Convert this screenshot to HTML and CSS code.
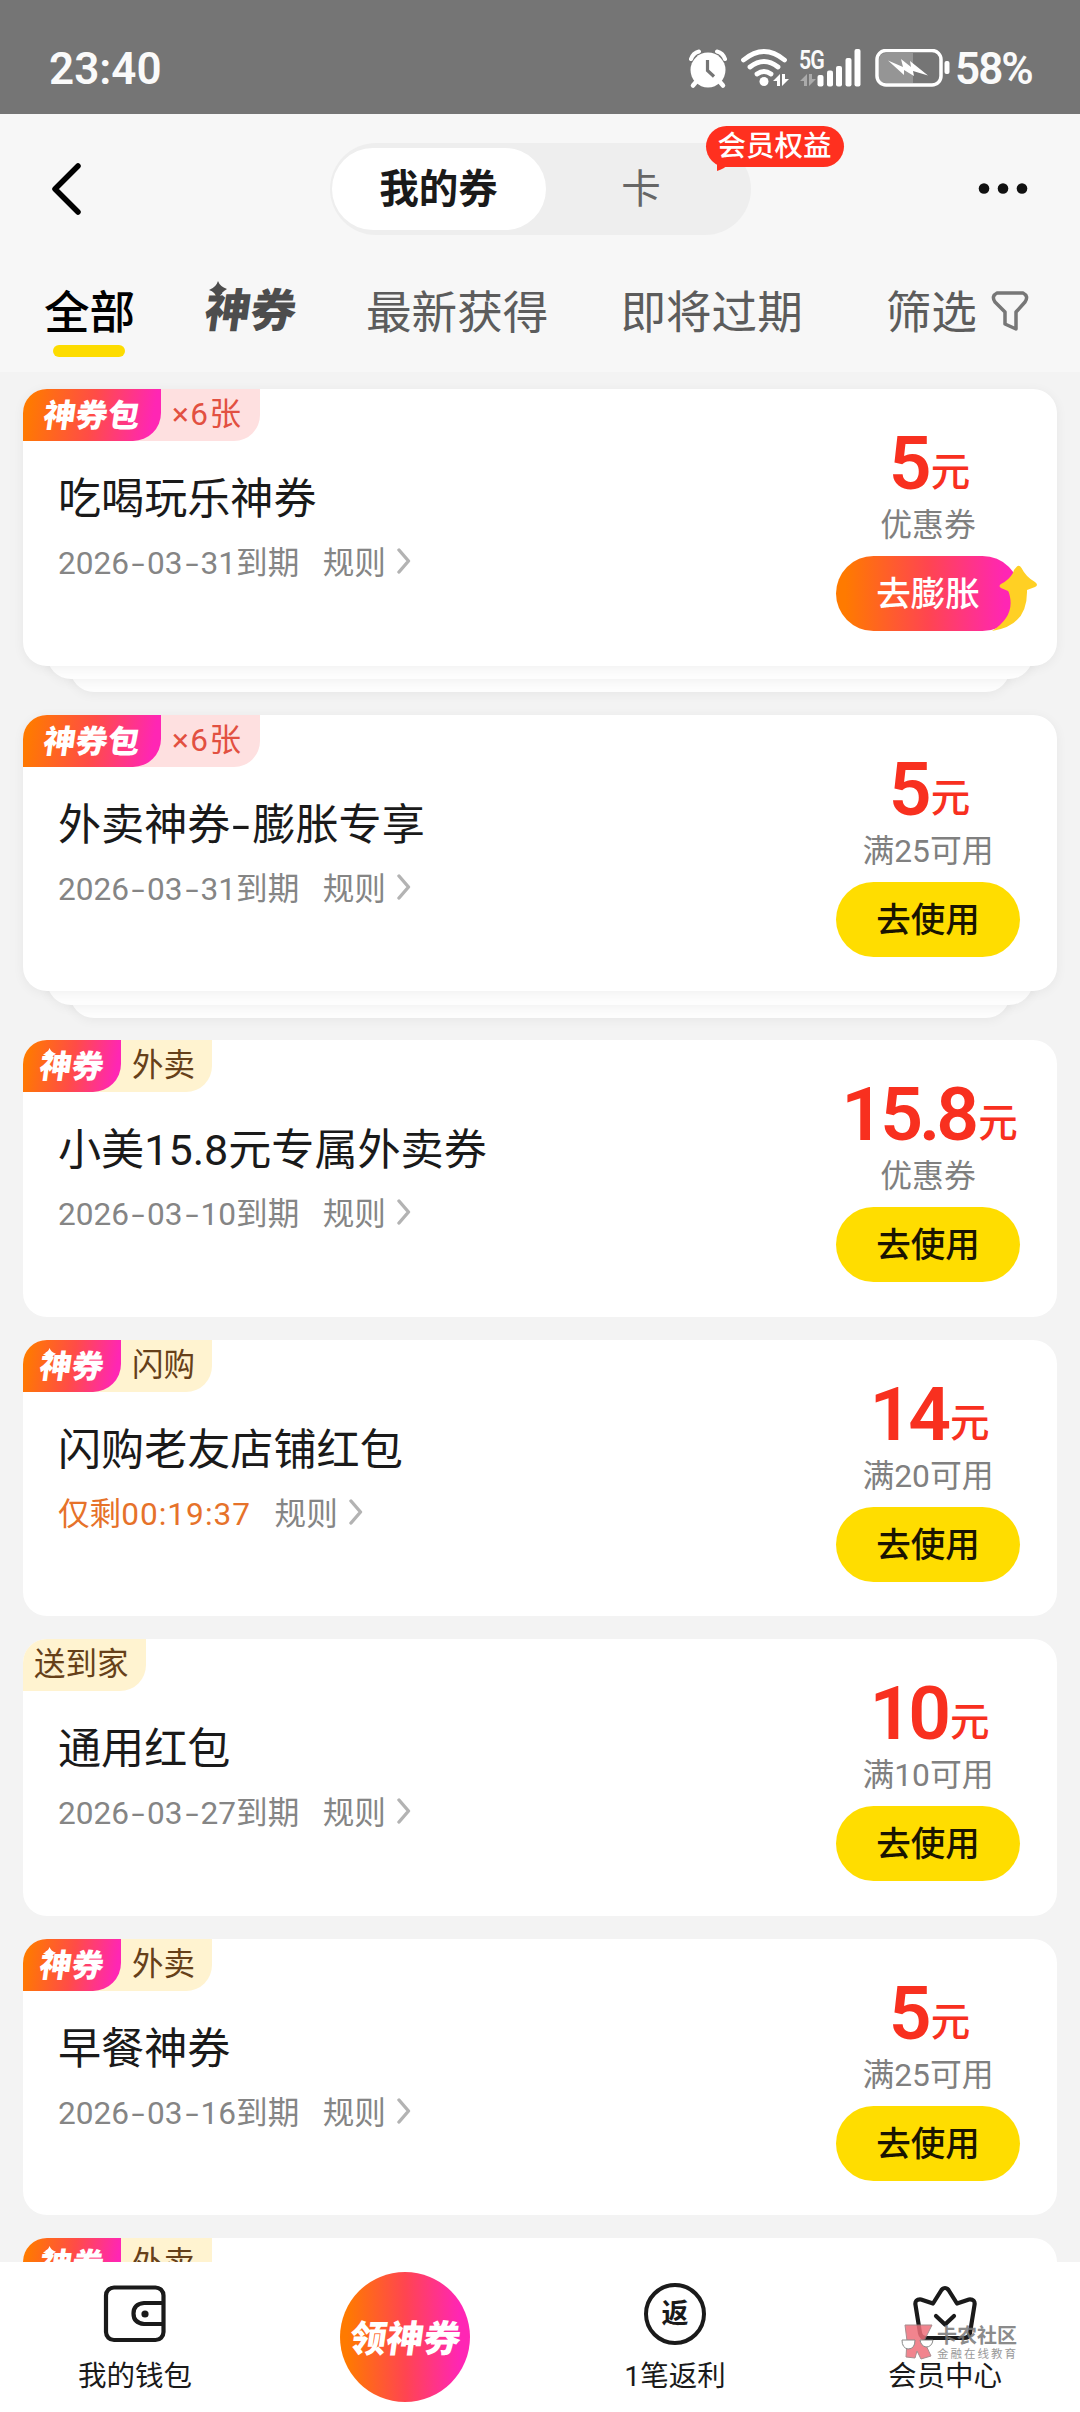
FILE: index.html
```html
<!DOCTYPE html>
<html lang="zh-CN">
<head>
<meta charset="utf-8">
<title>我的券</title>
<link rel="stylesheet" href="styles.css">
</head>
<body>
<svg width="0" height="0" class="defs" aria-hidden="true">
  <symbol id="chev" viewBox="0 0 14 26"><path d="M2 2 L11.5 13 L2 24" fill="none" stroke="#b3b3b3" stroke-width="3.400" stroke-linecap="round" stroke-linejoin="round"/></symbol>
  <symbol id="spark" viewBox="0 0 20 20"><path d="M10 0 Q12 6 20 9 Q14 12 10 20 Q7 12 0 10 Q8 7 10 0Z" fill="currentColor"/></symbol>
</svg>
<div class="screen">
  <div class="status">
    <span class="clock">23:40</span>
    <div class="status-right">
      <svg class="alarm" width="38" height="40" viewBox="0 0 38 40"><circle cx="19" cy="21" r="17.500" fill="#fff"/><path d="M2 10 Q4 4 10 2.500 M36 10 Q34 4 28 2.500" stroke="#fff" stroke-width="4" stroke-linecap="round" fill="none"/><path d="M7 33 L4 36.500 M31 33 L34 36.500" stroke="#fff" stroke-width="4.500" stroke-linecap="round"/><path d="M18.500 11 V21.500 L25 27.500" fill="none" stroke="#757575" stroke-width="3.200"/></svg>
      <svg class="wifi" width="50" height="40" viewBox="0 0 50 40"><g fill="none" stroke="#fff" stroke-width="4.800" stroke-linecap="round"><path d="M3.500 11 Q24 -6 44.500 11"/><path d="M10 18 Q24 7 38 18"/><path d="M17 25 Q24 20 31 25"/></g><circle cx="24" cy="32.500" r="4.500" fill="#fff"/><path d="M33 32 L40 25 V37 H37 V32Z M42 25 V37 L49 30 H45 V25Z" fill="#fff"/></svg>
      <div class="cell">
        <span class="g5">5G</span>
        <svg width="62" height="40" viewBox="0 0 62 40"><path d="M1 32 L8 25 V37 H5 V32Z M10 25 V37 L17 30 H13 V25Z" fill="#aaa"/><g fill="#fff"><rect x="18.500" y="26" width="6" height="11.500" rx="2"/><rect x="28" y="21.500" width="6" height="16" rx="2"/><rect x="37" y="17" width="6" height="20.500" rx="2"/><rect x="46.500" y="9" width="6" height="28.500" rx="2"/><rect x="55.500" y="0" width="6" height="37.500" rx="2"/></g></svg>
      </div>
      <svg class="battery" width="76" height="40" viewBox="0 0 76 40"><path d="M11 4 H38 V34 H11 Q4 34 4 29 V11 Q4 4 11 4Z" fill="#959595"/><rect x="2" y="1.500" width="64" height="34.500" rx="9" fill="none" stroke="#fff" stroke-width="3.500"/><path d="M13 11.500 L28 18 L26 10 L36 18 L35 12 L53 26.500 L38 22 L39 27 L29 21 L29 26Z" fill="#fff"/><rect x="69.500" y="12" width="5" height="13" rx="2" fill="#fff"/></svg>
      <span class="pct">58%</span>
    </div>
  </div>

  <header class="header">
    <div class="nav">
      <svg class="back" width="36" height="56" viewBox="0 0 36 56"><path d="M31 5 L8 28 L31 51" fill="none" stroke="#000" stroke-width="5.500" stroke-linecap="round" stroke-linejoin="round"/></svg>
      <div class="segment">
        <span class="seg on">我的券</span><span class="seg">卡</span>
        <span class="bubble">会员权益<svg width="14" height="12" viewBox="0 0 14 12"><path d="M1 0 L1 11 Q8 9 13 4Z" fill="#ff301f"/></svg></span>
      </div>
      <svg class="more" width="50" height="12" viewBox="0 0 50 12"><g fill="#111"><circle cx="6" cy="5.500" r="5.300"/><circle cx="25" cy="5.500" r="5.300"/><circle cx="44" cy="5.500" r="5.300"/></g></svg>
    </div>
    <nav class="tabs">
      <span class="tab active">全部</span>
      <span class="tab logo"><b>神券</b><svg class="spark"><use href="#spark"/></svg></span>
      <span class="tab t3">最新获得</span>
      <span class="tab t4">即将过期</span>
      <span class="tab t5">筛选<svg width="38" height="42" viewBox="0 0 38 42"><path d="M6 3 H32 Q38 6 34 12 L25 22 V39 L14 34 V22 L4 12 Q0 6 6 3Z" fill="none" stroke="#777" stroke-width="3.500" stroke-linejoin="round"/></svg></span>
    </nav>
  </header>

  <main class="list">
    <section class="card stack">
      <div class="face">
        <div class="tags"><span class="brand pack"><b>神券包</b></span><span class="tag pink">×6张</span></div>
        <div class="info"><h2>吃喝玩乐神券</h2><p><span>2026<i>-</i>03<i>-</i>31到期</span><span class="rule">规则</span><svg class="chev"><use href="#chev"/></svg></p></div>
        <div class="side"><div class="price"><b>5</b><em>元</em></div><div class="cond">优惠券</div><span class="btn hot">去膨胀<svg width="42" height="68" viewBox="0 0 42 68"><path d="M19.500 3 Q22 0 24.500 4 Q29 13 38 18 Q42 21 38 23 L30 26 Q31 62 -5 67 Q17 53 13 33 Q12 28 11 27 L4 24 Q1 22 4 20 Q12 16 16 9 Q17 5 19.500 3Z" fill="#ffd024"/></svg></span></div>
      </div>
    </section>
    <section class="card stack">
      <div class="face">
        <div class="tags"><span class="brand pack"><b>神券包</b></span><span class="tag pink">×6张</span></div>
        <div class="info"><h2>外卖神券<i>-</i>膨胀专享</h2><p><span>2026<i>-</i>03<i>-</i>31到期</span><span class="rule">规则</span><svg class="chev"><use href="#chev"/></svg></p></div>
        <div class="side"><div class="price"><b>5</b><em>元</em></div><div class="cond">满25可用</div><span class="btn">去使用</span></div>
      </div>
    </section>
    <section class="card">
      <div class="face">
        <div class="tags"><span class="brand"><b>神券</b><svg class="spark"><use href="#spark"/></svg></span><span class="tag">外卖</span></div>
        <div class="info"><h2>小美15.8元专属外卖券</h2><p><span>2026<i>-</i>03<i>-</i>10到期</span><span class="rule">规则</span><svg class="chev"><use href="#chev"/></svg></p></div>
        <div class="side"><div class="price"><b>15.8</b><em>元</em></div><div class="cond">优惠券</div><span class="btn">去使用</span></div>
      </div>
    </section>
    <section class="card">
      <div class="face">
        <div class="tags"><span class="brand"><b>神券</b><svg class="spark"><use href="#spark"/></svg></span><span class="tag">闪购</span></div>
        <div class="info"><h2>闪购老友店铺红包</h2><p><span class="left">仅剩<span>00:19:37</span></span><span class="rule">规则</span><svg class="chev"><use href="#chev"/></svg></p></div>
        <div class="side"><div class="price"><b>14</b><em>元</em></div><div class="cond">满20可用</div><span class="btn">去使用</span></div>
      </div>
    </section>
    <section class="card">
      <div class="face">
        <div class="tags"><span class="tag first">送到家</span></div>
        <div class="info"><h2>通用红包</h2><p><span>2026<i>-</i>03<i>-</i>27到期</span><span class="rule">规则</span><svg class="chev"><use href="#chev"/></svg></p></div>
        <div class="side"><div class="price"><b>10</b><em>元</em></div><div class="cond">满10可用</div><span class="btn">去使用</span></div>
      </div>
    </section>
    <section class="card">
      <div class="face">
        <div class="tags"><span class="brand"><b>神券</b><svg class="spark"><use href="#spark"/></svg></span><span class="tag">外卖</span></div>
        <div class="info"><h2>早餐神券</h2><p><span>2026<i>-</i>03<i>-</i>16到期</span><span class="rule">规则</span><svg class="chev"><use href="#chev"/></svg></p></div>
        <div class="side"><div class="price"><b>5</b><em>元</em></div><div class="cond">满25可用</div><span class="btn">去使用</span></div>
      </div>
    </section>
    <section class="card">
      <div class="face">
        <div class="tags"><span class="brand"><b>神券</b><svg class="spark"><use href="#spark"/></svg></span><span class="tag">外卖</span></div>
      </div>
    </section>
  </main>

  <footer class="bar">
    <div class="item"><svg width="66" height="66" viewBox="0 0 66 66"><g fill="none" stroke="#1a1a1a" stroke-width="4.200"><rect x="4" y="6.500" width="57.500" height="52.500" rx="8"/><path d="M61 22 H42 Q31.500 23 31.500 32.500 Q31.500 42 42 43 H61"/></g><circle cx="43" cy="33" r="3.600" fill="#1a1a1a"/></svg><span>我的钱包</span></div>
    <div class="item"><div class="orb"><b>领神券</b></div></div>
    <div class="item"><div class="ring">返</div><span>1笔返利</span></div>
    <div class="item"><svg width="66" height="66" viewBox="0 0 66 66"><g fill="none" stroke="#1a1a1a" stroke-width="4.200" stroke-linecap="round" stroke-linejoin="round"><path d="M21 22.500 L29.500 9 Q33 5 36.500 9 L45 22.500 L57 18.500 Q63.500 18 62.500 24 L58 52 Q57 57 52 57 H14 Q9 57 8 52 L3.500 24 Q2.500 18 9 18.500Z"/><path d="M24 35 L33 43.500 L42 35"/></g></svg><span>会员中心</span>
      <div class="mark"><svg width="34" height="36" viewBox="0 0 34 36"><path d="M5 1 H32 L24 17 L31 32 L21 35 L17 27 L15 34 L6 33 L7 17Z" fill="#ef6f7b" stroke="#9a7a7d" stroke-width="1"/><path d="M2 16 H15 Q15 25 8 25 Q2 24 2 16Z M20 16 H33 Q32 23 26 23 Q21 22 20 16Z" fill="#fff" stroke="#777"/></svg><div><strong>卡农社区</strong><small>金融在线教育</small></div></div>
    </div>
  </footer>
</div>
</body>
</html>
```

FILE: styles.css
```css
* { box-sizing: border-box; margin: 0; padding: 0; }
body { font-family: Roboto, "Noto Sans CJK SC", sans-serif; width: 1080px; height: 2412px; overflow: hidden; color: #1a1a1a; }
svg { display: block; flex: none; }
.defs { position: absolute; }
i, em { font-style: normal; }
.screen { width: 1080px; height: 2412px; display: flex; flex-direction: column; background: #f3f3f3; white-space: nowrap; }

.status { height: 114px; flex: none; background: #757575; color: #fafafa; display: flex; justify-content: space-between; padding: 49px 43px 0 49px; font-weight: 600; font-size: 44px; line-height: 40px; }
.status-right { display: flex; }
.wifi { margin-left: 13px; }
.cell { position: relative; margin-left: 9px; }
.g5 { position: absolute; left: 0; top: 1px; font-size: 26px; line-height: 20px; letter-spacing: -1px; transform: scaleX(.82); transform-origin: 0 0; }
.battery { margin-left: 14px; }
.pct { margin-left: 4px; width: 82px; letter-spacing: -2px; }

.header { height: 258px; flex: none; background: #f7f7f7; }
.nav { height: 150px; display: flex; align-items: center; justify-content: space-between; padding: 0 52px 0 47px; }
.segment { position: relative; left: 8px; width: 421px; height: 92px; border-radius: 46px; background: #eee; display: flex; align-items: center; padding: 0 2px; margin-left: 3px; }
.seg { flex: 1; height: 82px; border-radius: 41px; display: flex; align-items: center; justify-content: center; font-size: 39.500px; line-height: 76px; color: #666; padding: 2px 12px 0 0; }
.seg.on { flex: 0 0 214px; background: #fff; color: #1a1a1a; font-weight: 600; padding: 2px 0 0; }
.bubble { position: absolute; left: 376px; top: -17px; width: 138px; height: 41px; border-radius: 21px; background: #ff301f; color: #fff; font-size: 28.500px; line-height: 42px; text-align: center; font-weight: 500; }
.bubble svg { position: absolute; left: 10px; top: 34px; }
.tabs { display: flex; align-items: flex-start; padding: 18px 0 0 44px; height: 100px; font-size: 45.600px; line-height: 64px; color: #5c5c5c; }
.tab.active { color: #000; font-weight: 500; width: 91px; }
.tab.active::after { content: ""; display: block; width: 72px; height: 12px; border-radius: 6px; background: #fddc00; margin: -1px 0 0 9px; }
.tab.logo { position: relative; margin-left: 70px; width: 92px; color: #4d4d4d; }
.logo b { display: block; font-weight: 900; transform: skewX(-8deg); margin-top: -2px; }
.logo .spark { position: absolute; left: 4px; top: -1px; width: 18px; height: 18px; }
.t3 { margin-left: 69px; }
.t4 { margin-left: 72px; }
.t5 { margin-left: 83px; display: flex; gap: 14px; align-items: center; }
.t5 svg { margin-top: -6px; }

.list { flex: 1; min-height: 0; overflow: hidden; padding: 17px 23px 0; display: flex; flex-direction: column; gap: 23px; }
.card { flex: none; height: 276.500px; position: relative; }
.stack { height: 302.500px; }
.face { position: relative; height: 276.500px; border-radius: 24px; background: #fff; z-index: 2; display: grid; grid-template: 52px 1fr / 1fr 258px; }
.stack .face { box-shadow: 0 2px 12px rgba(0,0,0,.055); }
.stack { isolation: isolate; }
.stack::before, .stack::after { content: ""; position: absolute; height: 60px; border-radius: 24px; background: #fdfdfd; box-shadow: 0 2px 12px rgba(0,0,0,.055); }
.stack::before { left: 24px; right: 24px; bottom: 12.500px; z-index: 1; }
.stack::after { left: 47px; right: 47px; bottom: -.5px; z-index: 0; }
.tags { grid-area: 1 / 1; display: flex; height: 52px; line-height: 51px; font-size: 31.500px; }
.brand { position: relative; z-index: 1; width: 98px; border-radius: 24px 0 28px 0; background: linear-gradient(100deg, #ff7a00 5%, #ff4c47 50%, #ff26b4 92%); color: #fff; display: flex; justify-content: center; }
.brand b { font-weight: 900; transform: skewX(-8deg); line-height: 54px; font-size: 32px; }
.brand .spark { position: absolute; left: 20px; top: 8px; width: 13px; height: 13px; }
.brand.pack { width: 138px; }
.tag { background: #fff3d0; color: #664019; padding: 0 17px 0 40px; margin-left: -29px; border-radius: 0 0 26px 0; }
.tag.first { margin: 0; padding: 0 17px 0 11px; border-top-left-radius: 24px; }
.tag.pink { background: #fee0e0; color: #e25041; letter-spacing: 1.500px; }
.info { grid-area: 2 / 1; padding: 28px 0 0 35px; }
h2 { font-size: 43.100px; font-weight: 400; line-height: 62px; height: 69px; }
h2 i { display: inline-block; width: 22px; text-align: center; transform: scaleX(1.500); }
p { display: flex; align-items: center; height: 44px; font-size: 31.600px; color: #858585; }
p i { display: inline-block; width: 18px; text-align: center; transform: scaleX(1.500); }
.rule { margin-left: 23.500px; }
.left { color: #e6722a; }
.left span { letter-spacing: 1px; }
.chev { width: 14px; height: 26px; margin: 2px 0 0 11px; }
.side { grid-area: 1 / 2 / 3 / 3; padding-top: 38px; display: flex; flex-direction: column; align-items: center; }
.price { height: 76px; line-height: 73px; color: #f8301f; display: flex; align-items: baseline; font-weight: 500; }
.price b { font-size: 75px; font-weight: 600; letter-spacing: -4px; margin-left: 3px; }
.price em { position: relative; top: -3px; font-size: 39.500px; margin-left: 3px; }
.cond { height: 44px; line-height: 44px; font-size: 31.800px; color: #808080; }
.btn { position: relative; margin-top: 9px; width: 184px; height: 75px; border-radius: 38px; background: #fd0; color: #1a1400; font-size: 34.500px; line-height: 76px; text-align: center; font-weight: 500; }
.btn.hot { background: linear-gradient(90deg, #ff7a00 5%, #ff4550 50%, #ff26b4 92%); color: #fff; }
.btn.hot svg { position: absolute; left: 161px; top: 8px; overflow: visible; }

.bar { height: 150px; flex: none; background: #fff; display: grid; grid-template-columns: repeat(4, 1fr); }
.item { position: relative; display: flex; flex-direction: column; align-items: center; padding-top: 19px; font-size: 28.500px; line-height: 40px; }
.item > span { margin-top: 9.500px; }
.orb { width: 130px; height: 130px; margin-top: -9px; border-radius: 50%; background: linear-gradient(90deg, #ff7a00 5%, #ff4550 50%, #ff26b4 92%); color: #fff; display: flex; align-items: center; justify-content: center; }
.orb b { font-size: 37px; font-weight: 900; transform: skewX(-8deg); padding-top: 6px; }
.ring { width: 62px; height: 62px; margin: 2px 0; border: 4.200px solid #1a1a1a; border-radius: 50%; font-size: 27px; font-weight: 700; line-height: 55px; text-align: center; }
.mark { position: absolute; left: 90px; top: 62px; display: flex; gap: 3px; opacity: .85; color: #777; }
.mark strong { display: block; font-size: 20px; line-height: 24px; font-weight: 700; }
.mark small { display: block; font-size: 11.500px; line-height: 13px; letter-spacing: 2px; color: #888; }
```
